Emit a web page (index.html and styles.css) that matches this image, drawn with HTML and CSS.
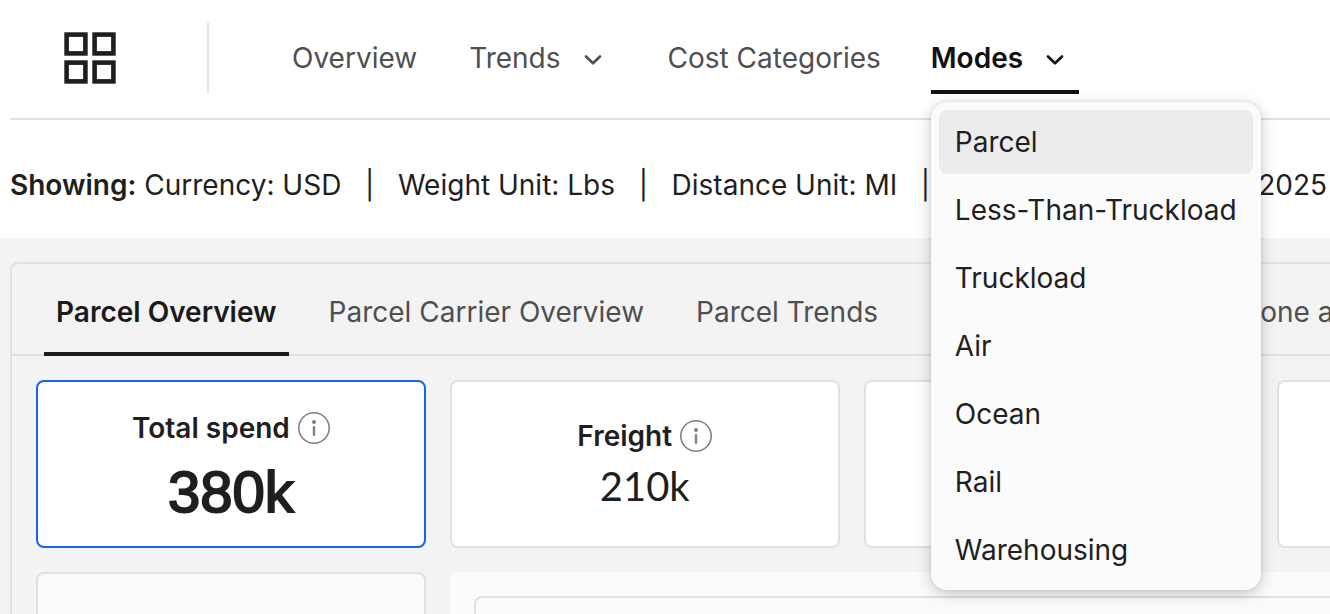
FILE: index.html
```html
<!DOCTYPE html>
<html lang="en">
<head>
  <meta charset="UTF-8">
  <meta name="viewport" content="width=device-width, initial-scale=1.0">
  <title>Parcel Overview</title>
  <link rel="stylesheet" href="styles.css">
</head>
<body>
  <header class="header">
    <svg class="logo" width="54" height="54" viewBox="0 0 54 54" fill="none" stroke="#1f1f1f" stroke-width="4.6">
      <rect x="3.6" y="3.6" width="18.8" height="18.8"></rect>
      <rect x="31.6" y="3.6" width="18.8" height="18.8"></rect>
      <rect x="3.6" y="31.6" width="18.8" height="18.8"></rect>
      <rect x="31.6" y="31.6" width="18.8" height="18.8"></rect>
    </svg>
    <nav class="nav">
      <a class="nav-item">Overview</a>
      <a class="nav-item">Trends
        <svg class="chevron" width="20" height="12" viewBox="0 0 20 12" fill="none" stroke="currentColor" stroke-width="2.6" stroke-linecap="round" stroke-linejoin="round">
          <polyline points="3 2.5 10 9.3 17 2.5"></polyline>
        </svg>
      </a>
      <a class="nav-item">Cost Categories</a>
      <div class="nav-item active">Modes
        <svg class="chevron" width="20" height="12" viewBox="0 0 20 12" fill="none" stroke="currentColor" stroke-width="2.6" stroke-linecap="round" stroke-linejoin="round">
          <polyline points="3 2.5 10 9.3 17 2.5"></polyline>
        </svg>
        <div class="menu">
          <a class="menu-item selected">Parcel</a>
          <a class="menu-item">Less-Than-Truckload</a>
          <a class="menu-item">Truckload</a>
          <a class="menu-item">Air</a>
          <a class="menu-item">Ocean</a>
          <a class="menu-item">Rail</a>
          <a class="menu-item">Warehousing</a>
        </div>
      </div>
    </nav>
  </header>

  <div class="showing">
    <span><b>Showing:</b> Currency: USD</span>
    <span class="bar">|</span>
    <span>Weight Unit: Lbs</span>
    <span class="bar">|</span>
    <span>Distance Unit: MI</span>
    <span class="bar">|</span>
    <span class="period">Period: Jan - Mar 2025</span>
  </div>

  <main class="content">
    <section class="panel">
      <div class="tabs">
        <a class="tab active">Parcel Overview</a>
        <a class="tab">Parcel Carrier Overview</a>
        <a class="tab">Parcel Trends</a>
        <a class="tab">Parcel Lanes</a>
        <a class="tab">Parcel Zone and Weight</a>
      </div>

      <div class="cards">
        <div class="card selected">
          <div class="card-title">Total spend
            <svg width="32" height="32" viewBox="0 0 32 32" fill="none" stroke="#808080">
              <circle cx="16" cy="16" r="15.2" stroke-width="1.6"></circle>
              <circle cx="16" cy="10" r="2" fill="#808080" stroke="none"></circle>
              <line x1="16" y1="15.3" x2="16" y2="22.7" stroke-width="2.4" stroke-linecap="round"></line>
            </svg>
          </div>
          <div class="total">380k</div>
        </div>
        <div class="card">
          <div class="card-title">Freight
            <svg width="32" height="32" viewBox="0 0 32 32" fill="none" stroke="#808080">
              <circle cx="16" cy="16" r="15.2" stroke-width="1.6"></circle>
              <circle cx="16" cy="10" r="2" fill="#808080" stroke="none"></circle>
              <line x1="16" y1="15.3" x2="16" y2="22.7" stroke-width="2.4" stroke-linecap="round"></line>
            </svg>
          </div>
          <div class="amount">210k</div>
        </div>
        <div class="card"></div>
        <div class="card"></div>
      </div>

      <div class="charts">
        <div class="side"></div>
        <div class="chart">
          <div class="chart-body"></div>
        </div>
      </div>
    </section>
  </main>
</body>
</html>
```

FILE: styles.css
```css
* {
  box-sizing: border-box;
}
body {
  margin: 0;
  height: 614px;
  overflow: hidden;
  font-family: Inter, sans-serif;
  font-size: 28px;
  line-height: 40px;
  white-space: nowrap;
  color: #1f1f1f;
  background-color: #fff;
}
.header {
  display: flex;
  align-items: center;
  height: 120px;
  margin-left: 10px;
  padding: 0 0 2px 53px;
  border-bottom: 2px solid #e1e1e1;
}
.logo {
  margin-right: 90px;
}
.nav {
  display: flex;
  gap: 52px;
  height: 72px;
  padding-left: 83px;
  border-left: 2px solid #e6e6e6;
}
.nav-item {
  position: relative;
  display: flex;
  align-items: center;
  color: #4f4f4f;
}
.nav-item.active {
  width: 148px;
  margin-left: -2px;
  font-weight: 600;
  color: #111;
  border-bottom: 4px solid #111;
  padding-top: 4px;
}
.chevron {
  margin: 3px 13px 0 22px;
}
.menu {
  position: absolute;
  top: 80px;
  left: 0;
  z-index: 10;
  display: flex;
  flex-direction: column;
  gap: 4px;
  width: 330px;
  padding: 8px;
  border-radius: 16px;
  background-color: #fbfbfb;
  box-shadow: 0 4px 16px rgba(0, 0, 0, 0.2), 0 0 4px rgba(0, 0, 0, 0.1);
  font-weight: 400;
  color: #1f1f1f;
}
.menu-item {
  height: 64px;
  padding: 12px 16px;
  border-radius: 8px;
}
.menu-item.selected {
  background-color: #ececec;
}
.showing {
  display: flex;
  height: 118px;
  padding: 45px 3px 0 10px;
}
.bar {
  width: 56.6px;
  text-align: center;
}
.showing b {
  font-weight: 600;
}
.period {
  margin-left: auto;
}
.content {
  padding: 24px 0 0 10px;
  background-color: #f3f3f3;
}
.panel {
  width: 1700px;
  height: 400px;
  border: 2px solid #e1e1e1;
  border-radius: 8px;
}
.tabs {
  display: flex;
  gap: 28px;
  height: 92px;
  padding-left: 32px;
  border-bottom: 2px solid #e1e1e1;
}
.tab {
  height: 92px;
  padding: 28px 12px 0;
  color: #4f4f4f;
}
.tab.active {
  font-weight: 600;
  color: #1a1a1a;
  border-bottom: 4px solid #1a1a1a;
}
.cards {
  display: flex;
  gap: 24px;
  padding: 24px;
}
.card {
  display: flex;
  flex-direction: column;
  align-items: center;
  justify-content: center;
  width: 389.8px;
  height: 168px;
  border: 2px solid #e1e1e1;
  border-radius: 8px;
  background-color: #fff;
}
.card.selected {
  border-color: #1a62f2;
}
.card-title {
  display: flex;
  align-items: center;
  gap: 8px;
  font-weight: 600;
}
.total {
  padding-top: 15px;
  font-family: "Liberation Sans", Arial, sans-serif;
  font-size: 58px;
  line-height: 57px;
  -webkit-text-stroke: 2px #1f1f1f;
}
.amount {
  padding-top: 4px;
  font-family: Lato, sans-serif;
  font-size: 40px;
  line-height: 52px;
}
.charts {
  display: flex;
  gap: 24px;
  padding: 0 24px;
}
.side {
  width: 390px;
  height: 200px;
  border: 2px solid #e1e1e1;
  border-radius: 8px;
  background-color: #fbfbfb;
}
.chart {
  flex: 1;
  padding: 24px;
  border-radius: 8px;
  background-color: #fbfbfb;
}
.chart-body {
  height: 176px;
  border: 2px solid #e1e1e1;
  border-radius: 8px;
}
```
